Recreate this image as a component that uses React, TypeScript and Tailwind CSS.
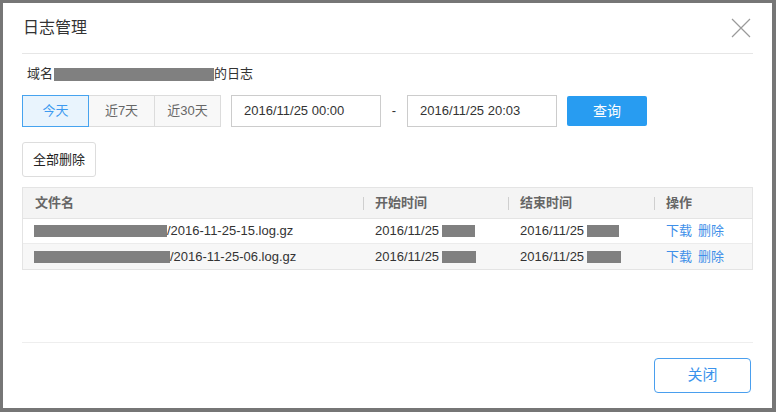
const font = { fontFamily: '"Liberation Sans", "Noto Sans CJK SC", sans-serif' };

const rows = [
  { nameMask: "w-[133px]", file: "/2016-11-25-15.log.gz", startMask: "w-[33px]", endMask: "w-[32px]", bg: "bg-white" },
  { nameMask: "w-[136px]", file: "/2016-11-25-06.log.gz", startMask: "w-[34px]", endMask: "w-[34px]", bg: "bg-[#f7f7f7]" },
];

function Mask({ className }: { className: string }) {
  return <span className={`inline-block h-[12px] bg-[#808080] ${className}`} />;
}

function HeadCell({ label }: { label: string }) {
  return (
    <div className="flex items-center">
      <span className="h-[13px] w-px bg-[#cfcfcf]" />
      <span className="ml-[11px]">{label}</span>
    </div>
  );
}

export default function App() {
  return (
    <div className="h-[412px] w-[776px] bg-[#767676] p-[3px]" style={font}>
      <div className="flex h-[405px] w-[769px] flex-col bg-white text-[13px] text-[#333]">
        <div className="flex h-[50px] items-center justify-between pl-[20px] pr-[21px]">
          <span className="text-[16px] text-[#333]">日志管理</span>
          <svg width="20" height="20" viewBox="0 0 20 20" className="-mt-[1px]">
            <path d="M1 1 L19 19 M19 1 L1 19" stroke="#9a9a9a" strokeWidth="1.2" fill="none" />
          </svg>
        </div>
        <div className="mx-[19px] h-px bg-[#e6e6e6]" />

        <div className="mt-[10px] flex h-[20px] items-center pl-[24px]">
          <span>域名</span>
          <span className="ml-px inline-block h-[13px] w-[160px] bg-[#808080]" />
          <span>的日志</span>
        </div>

        <div className="mt-[11px] flex items-center pl-[19px]">
          <div className="flex h-[32px]">
            <button className="w-[67px] border border-[#46a3ef] bg-[#e9f4fd] text-[#3d9af0]">今天</button>
            <button className="w-[66px] border-y border-r border-[#dcdcdc] bg-[#f8f8f8] text-[#666]">近7天</button>
            <button className="w-[66px] border-y border-r border-[#dcdcdc] bg-[#f8f8f8] text-[#666]">近30天</button>
          </div>
          <div className="ml-[10px] flex h-[32px] w-[150px] items-center border border-[#cccccc] pl-[12px]">
            2016/11/25 00:00
          </div>
          <span className="mx-[10px] w-[6px] text-center">-</span>
          <div className="flex h-[32px] w-[150px] items-center border border-[#cccccc] pl-[12px]">
            2016/11/25 20:03
          </div>
          <button className="ml-[10px] h-[30px] w-[80px] rounded-[2px] bg-[#289cf1] text-[14px] text-white">查询</button>
        </div>

        <div className="mt-[15px] pl-[19px]">
          <button className="h-[35px] w-[74px] rounded-[3px] border border-[#dddddd] bg-white text-[13px] text-[#222]">
            全部删除
          </button>
        </div>

        <div className="mx-[19px] mt-[10px] border border-[#e4e4e4]">
          <div className="grid h-[31px] grid-cols-[340px_145px_146px_1fr] items-center border-b border-[#e4e4e4] bg-[#f4f4f4] font-bold text-[#666]">
            <span className="pl-[12px]">文件名</span>
            <HeadCell label="开始时间" />
            <HeadCell label="结束时间" />
            <HeadCell label="操作" />
          </div>
          {rows.map((r, i) => (
            <div
              key={i}
              className={`grid h-[25px] grid-cols-[340px_145px_146px_1fr] items-center ${r.bg} ${i === 0 ? "border-b border-[#ececec]" : ""}`}
            >
              <span className="flex items-center pl-[11px]">
                <Mask className={r.nameMask} />
                <span>{r.file}</span>
              </span>
              <span className="flex items-center pl-[12px]">
                <span>2016/11/25</span>
                <Mask className={`ml-[3px] ${r.startMask}`} />
              </span>
              <span className="flex items-center pl-[12px]">
                <span>2016/11/25</span>
                <Mask className={`ml-[3px] ${r.endMask}`} />
              </span>
              <span className="flex items-center gap-[6px] pl-[12px] text-[#3e8fe9]">
                <span>下载</span>
                <span>删除</span>
              </span>
            </div>
          ))}
        </div>

        <div className="mt-auto">
          <div className="mx-[19px] h-px bg-[#eeeeee]" />
          <div className="flex justify-end pb-[15px] pr-[21px] pt-[15px]">
            <button className="h-[35px] w-[97px] rounded-[4px] border border-[#4a9fee] bg-white text-[15px] text-[#3b93ec]">
              关闭
            </button>
          </div>
        </div>
      </div>
    </div>
  );
}
